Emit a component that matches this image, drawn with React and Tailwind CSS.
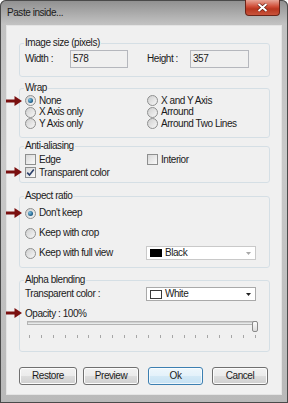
import React from 'react';

const ticks = Array.from({ length: 20 });

function Arrow({ className }) {
  return (
    <svg className={className} width="16" height="10" viewBox="0 0 16 10">
      <path d="M0 3.4 H8.5 V0 L16 5 L8.5 10 V6.6 H0 Z" fill="#7a1010" />
    </svg>
  );
}

function Radio({ checked, label }) {
  return (
    <div className="flex items-center">
      <span className="flex h-[11px] w-[11px] items-center justify-center rounded-full border border-[#8e8f8f] bg-[linear-gradient(135deg,#cfcfcf,#f7f7f7)]">
        {checked && (
          <span className="h-[5px] w-[5px] rounded-full bg-[radial-gradient(circle_at_35%_35%,#7fc4e6,#1b5a84_70%)]" />
        )}
      </span>
      <span className="ml-[3px]">{label}</span>
    </div>
  );
}

function Check({ checked, label }) {
  return (
    <div className="flex items-center">
      <span className="flex h-[11px] w-[11px] items-center justify-center border border-[#8e8f8f] bg-[linear-gradient(135deg,#d8d8d8,#fafafa)]">
        {checked && (
          <svg width="9" height="9" viewBox="0 0 9 9">
            <path d="M1.2 4.6 L3.5 7 L7.8 1.6" stroke="#2a3f6a" strokeWidth="1.6" fill="none" />
          </svg>
        )}
      </span>
      <span className="ml-[3px]">{label}</span>
    </div>
  );
}

function Combo({ swatch, label, disabled }) {
  return (
    <div
      className={`flex h-[14px] w-[110px] items-center bg-white pl-[3px] border ${
        disabled ? 'border-[#c9c9c9]' : 'border-[#a9a9a9]'
      }`}
    >
      {swatch === 'black' ? (
        <span className="h-[8px] w-[12px] bg-black" />
      ) : (
        <span className="h-[9px] w-[12px] border border-[#3a3a3a] bg-white" />
      )}
      <span className="ml-[3px]">{label}</span>
      <svg className="ml-auto mr-[4px]" width="5" height="3" viewBox="0 0 5 3">
        <path d="M0 0 H5 L2.5 3 Z" fill={disabled ? '#a8a8a8' : '#222'} />
      </svg>
    </div>
  );
}

function Group({ title, className = '', children }) {
  return (
    <fieldset className={`rounded-[3px] border border-[#d5dfe5] px-[4px] ${className}`}>
      <legend className="ml-0 px-[1px] leading-[12px]">{title}</legend>
      {children}
    </fieldset>
  );
}

function Button({ label, primary, className = '' }) {
  return (
    <div
      className={`flex h-[18px] items-center justify-center rounded-[3px] border ${
        primary
          ? 'border-[#3c7fb1] bg-[linear-gradient(#eef7fc,#e3f1fa_50%,#d3e9f6_50%,#c6e1f3)] shadow-[inset_0_0_0_1px_#ffffffb0]'
          : 'border-[#707070] bg-[linear-gradient(#f2f2f2,#ebebeb_50%,#dddddd_50%,#cfcfcf)] shadow-[inset_0_0_0_1px_#fcfcfc]'
      } ${className}`}
    >
      {label}
    </div>
  );
}

export default function App() {
  return (
    <div className="relative flex h-[403px] w-[288px] flex-col overflow-hidden rounded-t-[6px] bg-[linear-gradient(#8f8f8f,#c2c2c2_6%,#c9c9c9_40%,#b9b9b9)] font-['Liberation_Sans',Arial,sans-serif] text-[10px] leading-[12px] tracking-[-0.45px] text-[#1b1b1b] shadow-[inset_0_0_0_1px_#4a4a4a]">
      {/* Title bar */}
      <div className="flex h-[25px] items-start justify-between">
        <span className="ml-[7px] mt-[7px]">Paste inside...</span>
        <div className="mr-[8px] flex h-[16px] w-[35px] items-center justify-center rounded-b-[4px] border border-t-0 border-[#6b2418] bg-[linear-gradient(#e8a597,#cf4b35_45%,#b8361f_60%,#c9543c)]">
          <svg width="11" height="9" viewBox="0 0 11 9">
            <path d="M1.5 1 L9.5 8 M9.5 1 L1.5 8" stroke="#5a1a10" strokeWidth="3.2" />
            <path d="M1.5 1 L9.5 8 M9.5 1 L1.5 8" stroke="#fff" strokeWidth="2" />
          </svg>
        </div>
      </div>

      {/* Client area */}
      <div className="mx-[6px] flex h-[370px] flex-col border border-[#e4e4e4] bg-[#f0f0f0] pl-[12px] pr-[11px] pt-[11px]">
        <Group title="Image size (pixels)" className="pb-[8px]">
          <div className="mt-[1px] flex h-[18px] items-center pl-[1px]">
            <span className="w-[45px]">Width :</span>
            <div className="flex h-[18px] w-[58px] items-center border border-[#b5b7bd] bg-[#f0f0f0] pl-[2px]">578</div>
            <span className="ml-[19px] w-[43px]">Height :</span>
            <div className="flex h-[18px] w-[59px] items-center border border-[#b5b7bd] bg-[#f0f0f0] pl-[2px]">357</div>
          </div>
        </Group>

        <Group title="Wrap" className="mt-[5px] pb-[7.5px]">
          <div className="mt-[1px] grid grid-cols-[122px_1fr] auto-rows-[11.5px] items-center pl-[1px]">
            <Radio checked label="None" />
            <Radio label="X and Y Axis" />
            <Radio label="X Axis only" />
            <Radio label="Arround" />
            <Radio label="Y Axis only" />
            <Radio label="Arround Two Lines" />
          </div>
        </Group>

        <Group title="Anti-aliasing" className="mt-[2px] pb-[3px]">
          <div className="mt-[1px] grid grid-cols-[122px_1fr] auto-rows-[13px] items-center pl-[1px]">
            <Check label="Edge" />
            <Check label="Interior" />
            <Check checked label="Transparent color" />
          </div>
        </Group>

        <Group title="Aspect ratio" className="mt-[7px] pb-[4px]">
          <div className="mt-[1px] flex flex-col pl-[1px]">
            <div className="flex h-[20px] items-center">
              <Radio checked label="Don't keep" />
            </div>
            <div className="flex h-[20px] items-center">
              <Radio label="Keep with crop" />
            </div>
            <div className="flex h-[20px] items-center">
              <div className="w-[121px]">
                <Radio label="Keep with full view" />
              </div>
              <Combo swatch="black" label="Black" disabled />
            </div>
          </div>
        </Group>

        <Group title="Alpha blending" className="mt-[6px] pb-[13px]">
          <div className="mt-[1px] flex h-[14px] items-center pl-[1px]">
            <span className="w-[121px]">Transparent color :</span>
            <Combo swatch="white" label="White" />
          </div>
          <div className="mt-[7px] flex h-[11px] items-center pl-[1px]">Opacity : 100%</div>
          <div className="relative ml-[3px] h-[12px] w-[233px]">
            <div className="mt-[2px] h-[4px] w-[230px] border border-[#b4b4b4] bg-[#e7eaea] shadow-[inset_0_1px_0_#d0d0d0]" />
            <div className="absolute left-[225px] top-0 h-[11px] w-[6px] rounded-[2px] border border-[#8a8a8a] bg-[linear-gradient(#fdfdfd,#dcdcdc)]" />
          </div>
          <div className="ml-[5px] mt-[2px] flex h-[3px] w-[227px] justify-between">
            {ticks.map((_, i) => (
              <span key={i} className="h-[3px] w-px bg-[#a6a6a6]" />
            ))}
          </div>
        </Group>

        <div className="mt-[15px] flex">
          <Button label="Restore" className="w-[58px]" />
          <Button label="Preview" className="ml-[6px] w-[56px]" />
          <Button label="Ok" primary className="ml-[9px] w-[55px]" />
          <Button label="Cancel" className="ml-[9px] w-[56px]" />
        </div>
      </div>

      {/* Annotation arrows */}
      <Arrow className="absolute left-[6px] top-[96px]" />
      <Arrow className="absolute left-[6px] top-[167px]" />
      <Arrow className="absolute left-[6px] top-[208px]" />
      <Arrow className="absolute left-[6px] top-[308px]" />
    </div>
  );
}
